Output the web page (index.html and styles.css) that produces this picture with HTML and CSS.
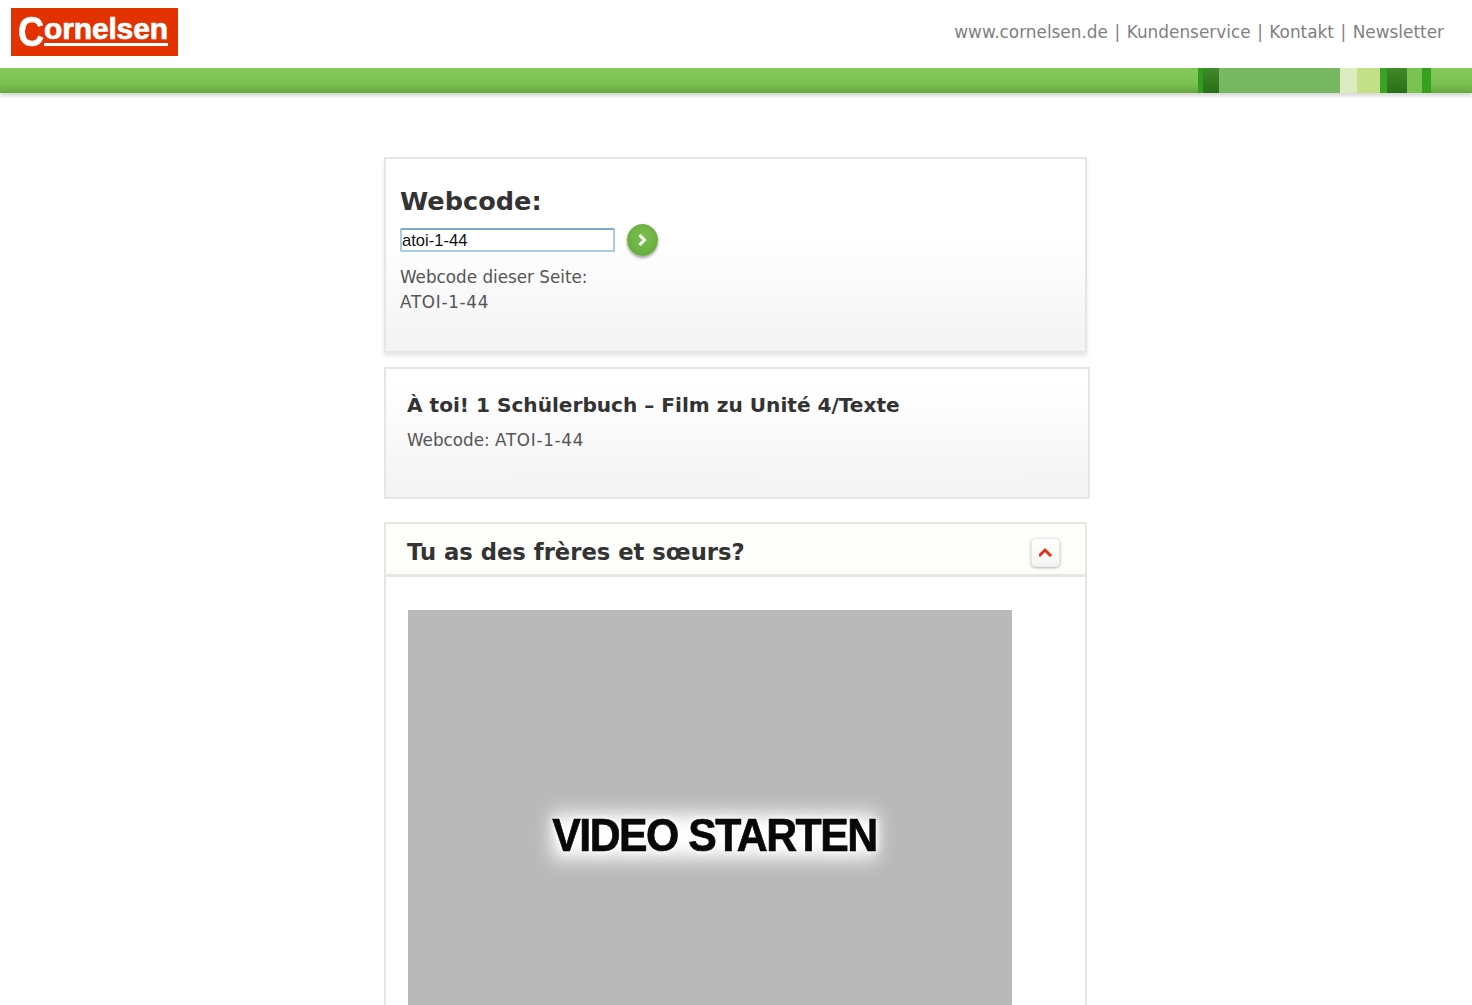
FILE: index.html
```html
<!DOCTYPE html>
<html lang="de">
<head>
<meta charset="utf-8">
<title>Cornelsen Webcode</title>
<link rel="stylesheet" href="styles.css">
</head>
<body>
<header class="top">
  <a class="logo"><span class="logo-c">C</span><span class="logo-rest">ornelsen</span></a>
  <nav class="links">
    <a>www.cornelsen.de</a><span>|</span><a>Kundenservice</a><span>|</span><a>Kontakt</a><span>|</span><a>Newsletter</a>
  </nav>
</header>
<div class="bar">
  <i class="s s1"></i><i class="s s2"></i><i class="s s3"></i><i class="s s4"></i><i class="s s5"></i><i class="s s6"></i><i class="s s7"></i><i class="s s8"></i><i class="s s9"></i>
</div>
<main class="col">
  <section class="card search">
    <h1>Webcode:</h1>
    <form class="row">
      <input class="field" type="text" value="atoi-1-44">
      <button class="go" type="button" aria-label="Los">
        <svg width="12" height="14" viewBox="0 0 12 14"><path d="M2.5 2 7.5 7 2.5 12" fill="none" stroke="#fff" stroke-width="3"/></svg>
      </button>
    </form>
    <p class="note">Webcode dieser Seite:<br><span class="cid">ATOI-1-44</span></p>
  </section>
  <section class="card info">
    <h2>À toi! 1 Schülerbuch – Film zu Unité 4/Texte</h2>
    <p class="code">Webcode: <span class="cid">ATOI-1-44</span></p>
  </section>
  <section class="card panel">
    <div class="panel-head">
      <h3>Tu as des frères et sœurs?</h3>
      <button class="toggle" type="button" aria-label="Einklappen">
        <svg width="14" height="10" viewBox="0 0 14 10"><path d="M0 9 6 3l6 6" fill="none" stroke="#e0301a" stroke-width="3"/></svg>
      </button>
    </div>
    <div class="panel-body">
      <div class="video"><span>VIDEO STARTEN</span></div>
    </div>
  </section>
</main>
</body>
</html>
```
FILE: styles.css
```css
* { box-sizing: border-box; }
html, body { margin: 0; height: 1005px; overflow: hidden; background: #fff; }
body { font-family: "DejaVu Sans", Verdana, sans-serif; color: #333; }
h1, h2, h3, p { margin: 0; }

.top { height: 68px; display: flex; justify-content: space-between; padding: 8px 28px 0 11px; }
.logo { width: 167px; height: 48px; background: #e23200; color: #fff; display: flex; align-items: flex-start; padding: 4px 0 0 7px; font-family: "Liberation Sans", Arial, sans-serif; font-weight: 700; }
.logo-c { font-size: 42px; line-height: 40px; width: 26px; display: block; transform: scaleX(.86); transform-origin: 0 50%; -webkit-text-stroke: .6px #fff; }
.logo-rest { font-size: 30px; letter-spacing: -.15px; line-height: 28px; height: 31px; width: 124px; border-bottom: 3px solid #fff; margin-top: 3px; white-space: nowrap; -webkit-text-stroke: .7px #fff; }
.links { display: flex; gap: 6.5px; font-size: 16.9px; color: #7f7f7f; padding-top: 14px; height: 40px; white-space: nowrap; }

.bar { height: 25px; position: relative; display: flex; justify-content: flex-end; padding-right: 41px; background: linear-gradient(#84c958 0, #7cc253 60%, #66a83f 100%); box-shadow: 0 3px 4px rgba(0,0,0,.16); }
.s { display: block; height: 100%; }
.s1 { width: 5px; background: #339c1e; }
.s2 { width: 16px; background: linear-gradient(#3f8a2a, #2a6f16); }
.s3 { width: 121px; background: #78b862; }
.s4 { width: 17px; background: #dcecc0; }
.s5 { width: 23px; background: #c3e086; }
.s6 { width: 7px; background: #3ba324; }
.s7 { width: 20px; background: linear-gradient(#3f8a2a, #2a6f16); }
.s8 { width: 15px; background: #7cc253; }
.s9 { width: 9px; background: #36a01f; }

.col { margin-left: 384px; padding-top: 64px; }
.card { border: 2px solid #e6e6e2; background: #fff; }
.search { width: 703px; height: 196px; padding: 26px 14px 0; background: linear-gradient(#fff 40%, #f3f3f3 100%); box-shadow: 0 3px 4px rgba(0,0,0,.1); }
.search h1 { font-size: 25.6px; line-height: 32px; font-weight: 700; }
.row { display: flex; align-items: center; gap: 12px; margin-top: 7px; }
.field { width: 215px; height: 24px; border: 2px solid #a9cbe4; border-top-color: #7fa9cb; border-radius: 2px; padding: 1px 0 0; font: 16.6px "Liberation Sans", Arial, sans-serif; color: #111; background: #fff; }
.go { width: 31px; height: 32px; padding: 0; border: 0; border-radius: 50%; background: radial-gradient(circle at 50% 40%, #7cc04f, #5fa638); box-shadow: 0 2px 3px rgba(0,0,0,.35); display: flex; align-items: center; justify-content: center; }
.note { font-size: 16.8px; line-height: 24.5px; color: #555; margin-top: 9px; }
.cid { letter-spacing: .7px; }

.info { width: 706px; height: 132px; margin-top: 14px; padding: 22px 21px 0; background: linear-gradient(#fff 10%, #f3f3f3 100%); }
.info h2 { font-size: 20.1px; line-height: 28px; font-weight: 700; }
.code { font-size: 16.8px; line-height: 24px; color: #555; margin-top: 9px; }

.panel { width: 703px; height: 560px; margin-top: 23px; }
.panel-head { height: 53px; display: flex; align-items: center; justify-content: space-between; padding: 6px 25px 0 21px; background: #fdfdfa; border-bottom: 3px solid #e6e6e2; }
.panel-head h3 { font-size: 22.7px; font-weight: 700; line-height: 28px; }
.toggle { width: 29px; height: 29px; padding: 0; border: 1px solid #e8e8e8; border-radius: 5px; background: linear-gradient(#fff, #f4f4f2); box-shadow: 0 1px 3px rgba(0,0,0,.3); display: flex; align-items: center; justify-content: center; }
.panel-body { padding: 33px 0 0 22px; }
.video { width: 604px; height: 454px; background: #b9b9b9; display: flex; align-items: center; justify-content: center; }
.video span { position: relative; font: 700 46px "Liberation Sans", Arial, sans-serif; color: #080808; letter-spacing: -1.6px; margin: 0 0 4px 8px; display: block; transform: scaleX(.93); -webkit-text-stroke: .7px #080808; text-shadow: 0 0 6px #fff, 0 0 10px #fff; }
.video span::before { content: ""; position: absolute; inset: 6px 0 4px; background: #fff; filter: blur(10px); z-index: -1; }
```
